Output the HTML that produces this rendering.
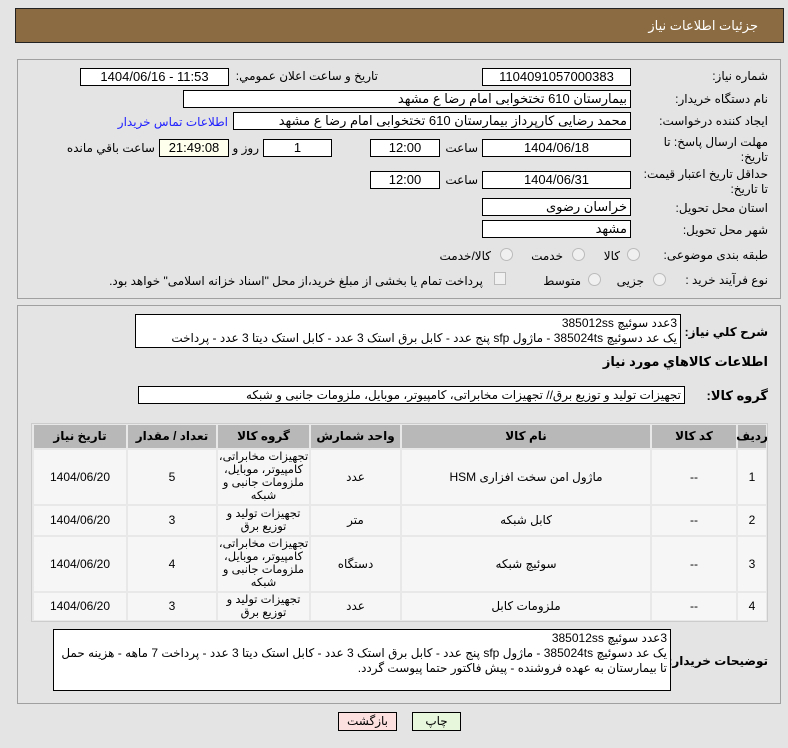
<!DOCTYPE html>
<html><head><meta charset="utf-8"><style>
body{margin:0;width:788px;height:748px;background:#e4e4e4;font-family:"Liberation Sans","DejaVu Sans",sans-serif;font-size:12px;color:#000;position:relative;overflow:hidden}
.a{position:absolute}
.lb{position:absolute;direction:rtl;text-align:right;white-space:nowrap}
.bx{position:absolute;background:#fff;border:1px solid #000;box-sizing:border-box;text-align:center;line-height:16px;font-size:13px;white-space:nowrap;overflow:hidden}
.r{direction:rtl;text-align:right;padding-right:3px}
.panel{position:absolute;border:1px solid #a0a0a0;box-sizing:border-box}
.c{position:absolute;background:#f6f6f6;display:flex;align-items:center;justify-content:center;text-align:center;direction:rtl;font-size:12px;line-height:13px}
.h{background:#b8b8b8;font-weight:bold}
.g{font-size:11.5px}
.rad{position:absolute;width:11px;height:11px;border-radius:50%;border:1px solid #bbb;background:#f0f0f0}
</style></head><body>
<div class="a" style="left:15px;top:8px;width:769px;height:35px;background:#8b6b41;border:1px solid #222;box-sizing:border-box"></div>
<div class="lb" style="right:30px;top:18px;color:#fff;font-size:13px">جزئیات اطلاعات نیاز</div>

<div class="panel" style="left:17px;top:59px;width:764px;height:240px"></div>
<div class="lb" style="right:20px;top:69px">شماره نیاز:</div>
<div class="bx" style="left:482px;top:68px;width:149px;height:18px">1104091057000383</div>
<div class="lb" style="right:410px;top:69px">تاريخ و ساعت اعلان عمومي:</div>
<div class="bx" style="left:80px;top:68px;width:149px;height:18px">1404/06/16 - 11:53</div>

<div class="lb" style="right:20px;top:92px">نام دستگاه خریدار:</div>
<div class="bx r" style="left:183px;top:90px;width:448px;height:18px">بیمارستان 610 تختخوابی امام رضا ع  مشهد</div>

<div class="lb" style="right:20px;top:114px">ایجاد کننده درخواست:</div>
<div class="bx r" style="left:233px;top:112px;width:398px;height:18px">محمد رضایی کارپرداز بیمارستان 610 تختخوابی امام رضا ع  مشهد</div>
<div class="lb" style="right:560px;top:115px;color:#2020ff">اطلاعات تماس خریدار</div>

<div class="lb" style="right:20px;top:135px;line-height:15px">مهلت ارسال پاسخ: تا<br>تاریخ:</div>
<div class="bx" style="left:482px;top:139px;width:149px;height:18px">1404/06/18</div>
<div class="lb" style="right:310px;top:141px">ساعت</div>
<div class="bx" style="left:370px;top:139px;width:70px;height:18px">12:00</div>
<div class="bx" style="left:263px;top:139px;width:69px;height:18px">1</div>
<div class="lb" style="right:529px;top:141px">روز و</div>
<div class="bx" style="left:159px;top:139px;width:70px;height:18px;background:#ffffee">21:49:08</div>
<div class="lb" style="right:633px;top:141px">ساعت باقي مانده</div>

<div class="lb" style="right:20px;top:167px;line-height:15px">حداقل تاریخ اعتبار قیمت:<br>تا تاریخ:</div>
<div class="bx" style="left:482px;top:171px;width:149px;height:18px">1404/06/31</div>
<div class="lb" style="right:310px;top:173px">ساعت</div>
<div class="bx" style="left:370px;top:171px;width:70px;height:18px">12:00</div>

<div class="lb" style="right:20px;top:201px">استان محل تحویل:</div>
<div class="bx r" style="left:482px;top:198px;width:149px;height:18px">خراسان رضوی</div>
<div class="lb" style="right:20px;top:223px">شهر محل تحویل:</div>
<div class="bx r" style="left:482px;top:220px;width:149px;height:18px">مشهد</div>

<div class="lb" style="right:20px;top:248px">طبقه بندی موضوعی:</div>
<div class="rad" style="left:627px;top:248px"></div><div class="lb" style="right:168px;top:249px">کالا</div>
<div class="rad" style="left:572px;top:248px"></div><div class="lb" style="right:225px;top:249px">خدمت</div>
<div class="rad" style="left:500px;top:248px"></div><div class="lb" style="right:297px;top:249px">کالا/خدمت</div>

<div class="lb" style="right:20px;top:273px">نوع فرآیند خرید :</div>
<div class="rad" style="left:653px;top:273px"></div><div class="lb" style="right:144px;top:274px">جزیی</div>
<div class="rad" style="left:588px;top:273px"></div><div class="lb" style="right:207px;top:274px">متوسط</div>
<div class="a" style="left:494px;top:272px;width:10px;height:11px;border:1px solid #bbb;background:#f0f0f0"></div>
<div class="lb" style="right:305px;top:274px">پرداخت تمام یا بخشی از مبلغ خرید،از محل "اسناد خزانه اسلامی" خواهد بود.</div>

<div class="panel" style="left:17px;top:305px;width:764px;height:399px"></div>
<div class="lb" style="right:20px;top:325px;font-weight:bold">شرح کلي نیاز:</div>
<div class="bx r" style="left:135px;top:314px;width:546px;height:34px;line-height:15px;font-size:12px;padding-top:1px">3عدد سوئیچ 385012ss<br>یک عد دسوئیچ 385024ts - ماژول sfp پنج عدد - کابل برق استک 3 عدد - کابل استک دیتا 3 عدد - پرداخت</div>
<div class="lb" style="right:20px;top:354px;font-weight:bold;font-size:13px">اطلاعات کالاهاي مورد نیاز</div>
<div class="lb" style="right:20px;top:388px;font-weight:bold;font-size:13px">گروه کالا:</div>
<div class="bx r" style="left:138px;top:386px;width:547px;height:18px;font-size:12px">تجهیزات تولید و توزیع برق// تجهیزات مخابراتی، کامپیوتر، موبایل، ملزومات جانبی و شبکه</div>

<div class="a" style="left:31px;top:423px;width:737px;height:199px;background:#e8e8e8;border:1px solid #ccc;box-sizing:border-box"></div>
<!-- header -->
<div class="c h" style="left:738px;top:425px;width:28px;height:23px">ردیف</div>
<div class="c h" style="left:652px;top:425px;width:84px;height:23px">کد کالا</div>
<div class="c h" style="left:402px;top:425px;width:248px;height:23px">نام کالا</div>
<div class="c h" style="left:311px;top:425px;width:89px;height:23px">واحد شمارش</div>
<div class="c h" style="left:218px;top:425px;width:91px;height:23px">گروه کالا</div>
<div class="c h" style="left:128px;top:425px;width:88px;height:23px">تعداد / مقدار</div>
<div class="c h" style="left:34px;top:425px;width:92px;height:23px">تاریخ نیاز</div>
<!-- row1 -->
<div class="c" style="left:738px;top:450px;width:28px;height:54px">1</div>
<div class="c" style="left:652px;top:450px;width:84px;height:54px">--</div>
<div class="c" style="left:402px;top:450px;width:248px;height:54px">ماژول امن سخت افزاری HSM</div>
<div class="c" style="left:311px;top:450px;width:89px;height:54px">عدد</div>
<div class="c g" style="left:218px;top:450px;width:91px;height:54px">تجهیزات مخابراتی،<br>کامپیوتر، موبایل،<br>ملزومات جانبی و<br>شبکه</div>
<div class="c" style="left:128px;top:450px;width:88px;height:54px">5</div>
<div class="c" style="left:34px;top:450px;width:92px;height:54px">1404/06/20</div>
<!-- row2 -->
<div class="c" style="left:738px;top:506px;width:28px;height:29px">2</div>
<div class="c" style="left:652px;top:506px;width:84px;height:29px">--</div>
<div class="c" style="left:402px;top:506px;width:248px;height:29px">کابل شبکه</div>
<div class="c" style="left:311px;top:506px;width:89px;height:29px">متر</div>
<div class="c g" style="left:218px;top:506px;width:91px;height:29px">تجهیزات تولید و<br>توزیع برق</div>
<div class="c" style="left:128px;top:506px;width:88px;height:29px">3</div>
<div class="c" style="left:34px;top:506px;width:92px;height:29px">1404/06/20</div>
<!-- row3 -->
<div class="c" style="left:738px;top:537px;width:28px;height:54px">3</div>
<div class="c" style="left:652px;top:537px;width:84px;height:54px">--</div>
<div class="c" style="left:402px;top:537px;width:248px;height:54px">سوئیچ شبکه</div>
<div class="c" style="left:311px;top:537px;width:89px;height:54px">دستگاه</div>
<div class="c g" style="left:218px;top:537px;width:91px;height:54px">تجهیزات مخابراتی،<br>کامپیوتر، موبایل،<br>ملزومات جانبی و<br>شبکه</div>
<div class="c" style="left:128px;top:537px;width:88px;height:54px">4</div>
<div class="c" style="left:34px;top:537px;width:92px;height:54px">1404/06/20</div>
<!-- row4 -->
<div class="c" style="left:738px;top:593px;width:28px;height:27px">4</div>
<div class="c" style="left:652px;top:593px;width:84px;height:27px">--</div>
<div class="c" style="left:402px;top:593px;width:248px;height:27px">ملزومات کابل</div>
<div class="c" style="left:311px;top:593px;width:89px;height:27px">عدد</div>
<div class="c g" style="left:218px;top:593px;width:91px;height:27px">تجهیزات تولید و<br>توزیع برق</div>
<div class="c" style="left:128px;top:593px;width:88px;height:27px">3</div>
<div class="c" style="left:34px;top:593px;width:92px;height:27px">1404/06/20</div>

<div class="lb" style="right:20px;top:654px;font-weight:bold">توضیحات خریدار:</div>
<div class="bx r" style="left:53px;top:629px;width:618px;height:62px;line-height:15px;font-size:12px;white-space:normal;padding-top:1px">3عدد سوئیچ 385012ss<br>یک عد دسوئیچ 385024ts - ماژول sfp پنج عدد - کابل برق استک 3 عدد - کابل استک دیتا 3 عدد - پرداخت 7 ماهه - هزینه حمل تا بیمارستان به عهده فروشنده - پیش فاکتور حتما پیوست گردد.</div>

<div class="bx" style="left:338px;top:712px;width:59px;height:19px;background:#fce0e0;font-size:12px">بازگشت</div>
<div class="bx" style="left:412px;top:712px;width:49px;height:19px;background:#e6f7dc;font-size:12px">چاپ</div>
</body></html>
